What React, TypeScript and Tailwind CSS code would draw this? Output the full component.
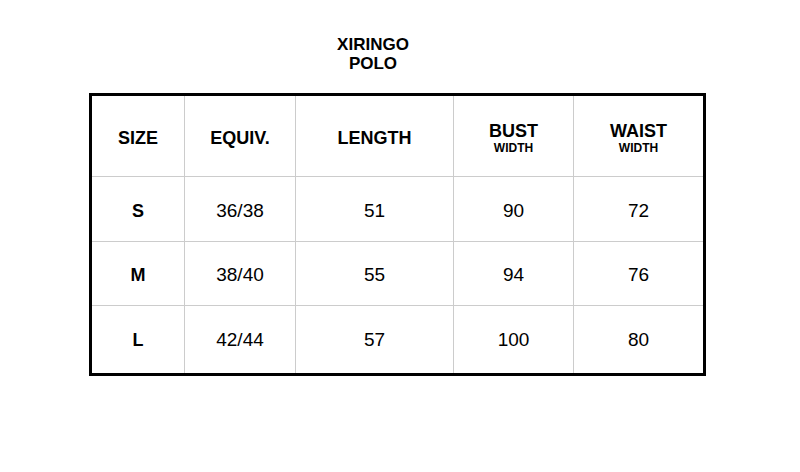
const HEAD = [
  { label: "SIZE" },
  { label: "EQUIV." },
  { label: "LENGTH" },
  { label: "BUST", sub: "WIDTH" },
  { label: "WAIST", sub: "WIDTH" },
];

const ROWS = [
  { size: "S", equiv: "36/38", length: "51", bust: "90", waist: "72", h: "h-[64px] pt-[4px]" },
  { size: "M", equiv: "38/40", length: "55", bust: "94", waist: "76", h: "h-[63px] pt-[3px]" },
  { size: "L", equiv: "42/44", length: "57", bust: "100", waist: "80", h: "h-[67px] pt-[1px]" },
];

export default function App() {
  return (
    <div className="h-[472px] w-[800px] bg-white font-['Liberation_Sans',Arial,sans-serif] text-black">
      <div className="ml-[293px] w-[160px] pt-[35px] text-center text-[17px] font-bold leading-[19px]">
        <p>XIRINGO</p>
        <p>POLO</p>
      </div>

      <div className="ml-[89px] mt-[20px] w-[617px] border-[3px] border-black">
        <div className="grid grid-cols-[92px_110px_157px_119px_129px] gap-px bg-[#cccccc]">
          {HEAD.map((c) => (
            <div key={c.label} className="flex h-[80px] flex-col items-center justify-center bg-white pt-[3px] font-bold">
              <span className="text-[18px] leading-[20px]">{c.label}</span>
              {c.sub && <span className="text-[12px] leading-[14px]">{c.sub}</span>}
            </div>
          ))}

          {ROWS.map((r) =>
            [r.size, r.equiv, r.length, r.bust, r.waist].map((v, i) => (
              <div
                key={r.size + i}
                className={`flex ${r.h} items-center justify-center bg-white ${i === 0 ? "text-[18px] font-bold" : "text-[19px]"}`}
              >
                {v}
              </div>
            ))
          )}
        </div>
      </div>
    </div>
  );
}
